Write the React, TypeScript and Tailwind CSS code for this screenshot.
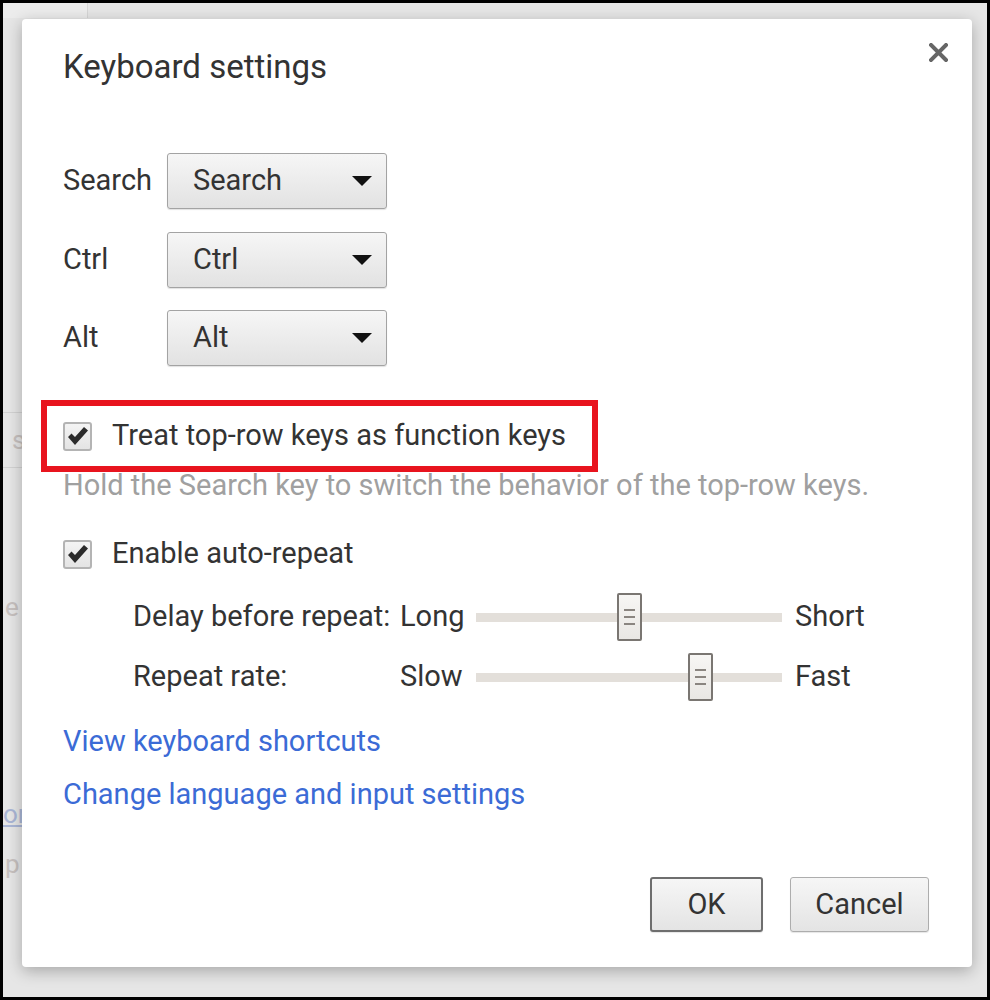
import React from "react";

const font = { fontFamily: "Roboto, 'Noto Sans', Arial, sans-serif" };

function Select({ value }: { value: string }) {
  return (
    <div className="flex h-[56px] w-[220px] items-center justify-between rounded-[3px] border border-[#a3a3a3] bg-gradient-to-b from-[#f6f6f6] to-[#e2e2e2] pl-[25px] pr-[14px] shadow-[0_1px_1px_rgba(0,0,0,0.12)]">
      <span className="text-[29px] text-[#333]">{value}</span>
      <svg width="20" height="10" viewBox="0 0 20 10">
        <polygon points="0,0 20,0 10,10" fill="#111" />
      </svg>
    </div>
  );
}

function Checkbox() {
  return (
    <div className="flex h-[29px] w-[29px] items-center justify-center rounded-[3px] border-2 border-[#b4b4b4] bg-gradient-to-b from-[#f4f4f4] to-[#e4e4e4]">
      <svg width="22" height="20" viewBox="0 0 22 20">
        <path d="M1 11 L4.5 7.5 L8 11 L17 1 L21 4.5 L8 19 Z" fill="#2b2b2b" />
      </svg>
    </div>
  );
}

function Slider({ pct }: { pct: number }) {
  return (
    <div className="relative flex h-[48px] w-[306px] items-center">
      <div className="h-[9px] w-full bg-[#e3dfda]" />
      <div
        className="absolute top-0 flex h-[48px] w-[25px] flex-col items-center justify-center gap-[5px] rounded-[2px] border-2 border-[#7a7672] bg-gradient-to-b from-[#f7f6f4] to-[#e9e7e4]"
        style={{ left: `calc(${pct}% - 12.5px)` }}
      >
        <div className="h-[2px] w-[11px] bg-[#8a8580]" />
        <div className="h-[2px] w-[11px] bg-[#8a8580]" />
        <div className="h-[2px] w-[11px] bg-[#8a8580]" />
      </div>
    </div>
  );
}

function Button({ label, focused, w }: { label: string; focused?: boolean; w: string }) {
  return (
    <div
      className={`flex h-[55px] items-center justify-center rounded-[3px] bg-gradient-to-b from-[#f6f6f6] to-[#e4e4e4] text-[29px] text-[#333] shadow-[0_1px_1px_rgba(0,0,0,0.1)] ${w} ${
        focused ? "border-2 border-[#6e6e6e]" : "border border-[#adadad]"
      }`}
    >
      {label}
    </div>
  );
}

export default function App() {
  return (
    <div style={font} className="relative h-[1000px] w-[990px] overflow-hidden border-[3px] border-black bg-[#e6e6e6]">
      {/* background page, dimmed */}
      <div className="flex h-full flex-col text-[26px] text-[#c7c1bf]">
        <div className="h-[15px] w-[85px] border-r border-[#d6d6d6] bg-[#ececec]" />
        <div className="mt-[394px] flex h-[56px] w-[40px] items-center border-y border-[#d2d2d2] pl-[9px]">s</div>
        <div className="mt-[120px] pl-[2px]">e</div>
        <div className="mt-[168px] pl-[0px] text-[#aab6d6] underline">ore</div>
        <div className="mt-[11px] pl-[2px]">p</div>
      </div>

      {/* dialog */}
      <div className="absolute left-[19px] top-[16px] flex h-[948px] w-[950px] flex-col rounded-[4px] bg-white pl-[41px] pr-[24px] text-[#333] shadow-[0_4px_16px_rgba(0,0,0,0.28)]">
        <div className="flex h-[96px] items-start justify-between">
          <div className="flex h-[96px] items-center text-[33px] text-[#333]">Keyboard settings</div>
          <svg className="mt-[24px]" width="19" height="19" viewBox="0 0 19 19">
            <path d="M2 2 L17 17 M17 2 L2 17" stroke="#666" strokeWidth="4" strokeLinecap="square" />
          </svg>
        </div>

        <div className="mt-[38px] flex flex-col gap-[22px] text-[29px]">
          <div className="flex h-[56px] items-center">
            <div className="w-[104px]">Search</div>
            <Select value="Search" />
          </div>
          <div className="flex h-[56px] items-center" style={{ marginTop: 1 }}>
            <div className="w-[104px]">Ctrl</div>
            <Select value="Ctrl" />
          </div>
          <div className="flex h-[56px] items-center">
            <div className="w-[104px]">Alt</div>
            <Select value="Alt" />
          </div>
        </div>

        <div className="-ml-[22px] mt-[34px] flex h-[72px] w-[557px] items-center gap-[20px] border-[6px] border-[#e8141e] pl-[16px] text-[29px]">
          <Checkbox />
          <span>Treat top-row keys as function keys</span>
        </div>

        <div className="flex h-[28px] items-center text-[29px] text-[#a0a0a0]">
          Hold the Search key to switch the behavior of the top-row keys.
        </div>

        <div className="mt-[36px] flex h-[36px] items-center gap-[20px] text-[29px]">
          <Checkbox />
          <span>Enable auto-repeat</span>
        </div>

        <div className="mt-[21px] flex h-[48px] items-center pl-[70px] text-[29px]">
          <div className="w-[267px]">Delay before repeat:</div>
          <div className="w-[76px]">Long</div>
          <Slider pct={50} />
          <div className="ml-[13px]">Short</div>
        </div>

        <div className="mt-[12px] flex h-[48px] items-center pl-[70px] text-[29px]">
          <div className="w-[267px]">Repeat rate:</div>
          <div className="w-[76px]">Slow</div>
          <Slider pct={73.4} />
          <div className="ml-[13px]">Fast</div>
        </div>

        <div className="mt-[23px] flex h-[36px] items-center text-[29px] text-[#3b6bd6]">View keyboard shortcuts</div>
        <div className="mt-[17px] flex h-[36px] items-center text-[29px] text-[#3b6bd6]">
          Change language and input settings
        </div>

        <div className="mt-[64px] flex justify-end gap-[27px] pr-[19px]">
          <Button label="OK" focused w="w-[113px]" />
          <Button label="Cancel" w="w-[139px]" />
        </div>
      </div>
    </div>
  );
}
